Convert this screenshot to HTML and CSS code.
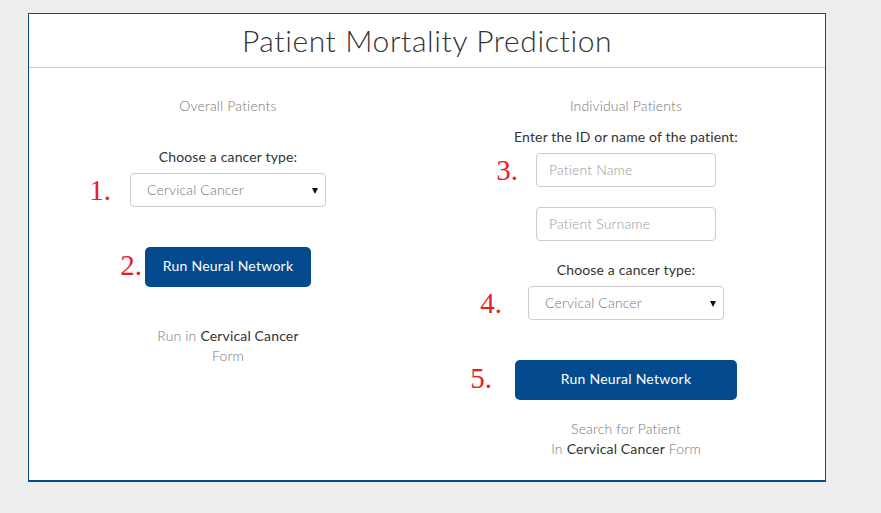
FILE: index.html
```html
<!DOCTYPE html>
<html>
<head>
<meta charset="utf-8">
<title>Patient Mortality Prediction</title>
<link rel="stylesheet" href="styles.css">
</head>
<body>
<div class="panel">
  <div class="panel-header"><h1 class="title">Patient Mortality Prediction</h1></div>
  <div class="columns">
    <div class="col">
      <div class="heading">Overall Patients</div>
      <div class="label label-first">Choose a cancer type:</div>
      <div class="field">
        <span class="num num-1">1.</span>
        <div class="select"><span>Cervical Cancer</span><i class="caret"></i></div>
      </div>
      <div class="field field-btn">
        <span class="num num-2">2.</span>
        <button class="btn btn-small">Run Neural Network</button>
      </div>
      <div class="note note-left">Run in <span class="dark">Cervical Cancer</span><br>Form</div>
    </div>
    <div class="col">
      <div class="heading">Individual Patients</div>
      <div class="label label-id">Enter the ID or name of the patient:</div>
      <div class="field">
        <span class="num num-3">3.</span>
        <input class="input" type="text" placeholder="Patient Name">
      </div>
      <div class="field field-gap">
        <input class="input" type="text" placeholder="Patient Surname">
      </div>
      <div class="label label-choose">Choose a cancer type:</div>
      <div class="field">
        <span class="num num-4">4.</span>
        <div class="select"><span>Cervical Cancer</span><i class="caret"></i></div>
      </div>
      <div class="field field-btn">
        <span class="num num-5">5.</span>
        <button class="btn btn-wide">Run Neural Network</button>
      </div>
      <div class="note note-right">Search for Patient<br>In <span class="dark">Cervical Cancer</span> Form</div>
    </div>
  </div>
</div>
</body>
</html>
```
FILE: styles.css
```css
* { box-sizing: border-box; }
html, body { margin: 0; padding: 0; }
body {
  background: #ededed;
  font-family: Lato, "Open Sans", sans-serif;
  color: #333;
  font-size: 14px;
  letter-spacing: 0.15px;
}
.panel {
  margin: 13px 0 0 28px;
  width: 798px;
  height: 469px;
  background: #fff;
  border: 1px solid #034b8e;
  border-bottom-width: 2px;
}
.panel-header {
  height: 54px;
  border-bottom: 1px solid #cccccc;
  text-align: center;
}
.title {
  margin: 0;
  font-weight: 300;
  font-size: 30px;
  line-height: 52px;
  color: #333;
  letter-spacing: 0.6px;
}
.columns {
  display: flex;
}
.col {
  flex: 1;
  display: flex;
  flex-direction: column;
  align-items: center;
  padding-top: 29px;
  line-height: 20px;
}
.heading { color: #777; font-weight: 300; margin-top: -1px; margin-bottom: 1px; }
.label { color: #333; }
.label-first { margin-top: 31px; }
.label-id { margin-top: 11px; }
.label-choose { margin-top: 20px; }
.label-first, .label-id, .label-choose { position: relative; top: -1px; }
.field {
  position: relative;
  margin-top: 5px;
}
.field-gap { margin-top: 20px; }
.field-btn { margin-top: 40px; }
.select {
  position: relative;
  width: 196px;
  height: 34px;
  border: 1px solid #ccc;
  border-radius: 4px;
  padding: 0 16px 1px;
  display: flex;
  align-items: center;
  color: #777;
  font-weight: 300;
}
.caret {
  position: absolute;
  right: 7px;
  top: 14px;
  width: 0;
  height: 0;
  border-left: 3.5px solid transparent;
  border-right: 3.5px solid transparent;
  border-top: 6px solid #111;
}
.input {
  display: block;
  width: 180px;
  height: 34px;
  border: 1px solid #ccc;
  border-radius: 4px;
  padding: 0 12px 2px;
  font-family: inherit;
  font-size: 14px;
  letter-spacing: 0.15px;
  color: #555;
  outline: none;
}
.input::placeholder { color: #999; font-weight: 300; }
.btn {
  display: block;
  height: 40px;
  border: none;
  border-radius: 5px;
  background: #034b8e;
  color: #fff;
  font-family: inherit;
  font-size: 14px;
  letter-spacing: 0.25px;
  padding: 0 0 3px;
}
.btn-small { width: 166px; }
.btn-wide { width: 222px; }
.num {
  position: absolute;
  top: 50%;
  transform: translateY(-50%);
  font-family: "Liberation Serif", serif;
  font-size: 29px;
  line-height: 30px;
  color: #ec1c24;
  white-space: nowrap;
  letter-spacing: 0;
}
.num-1 { right: calc(100% + 19px); }
.num-2 { right: calc(100% + 3px); margin-top: -2px; }
.num-3 { right: calc(100% + 18px); }
.num-4 { right: calc(100% + 26px); }
.num-5 { right: calc(100% + 23px); margin-top: -2px; }
.note { color: #777; text-align: center; font-weight: 300; position: relative; top: -1px; }
.note-left { margin-top: 40px; }
.note-right { margin-top: 20px; }
.dark { color: #333; font-weight: 400; }
```
